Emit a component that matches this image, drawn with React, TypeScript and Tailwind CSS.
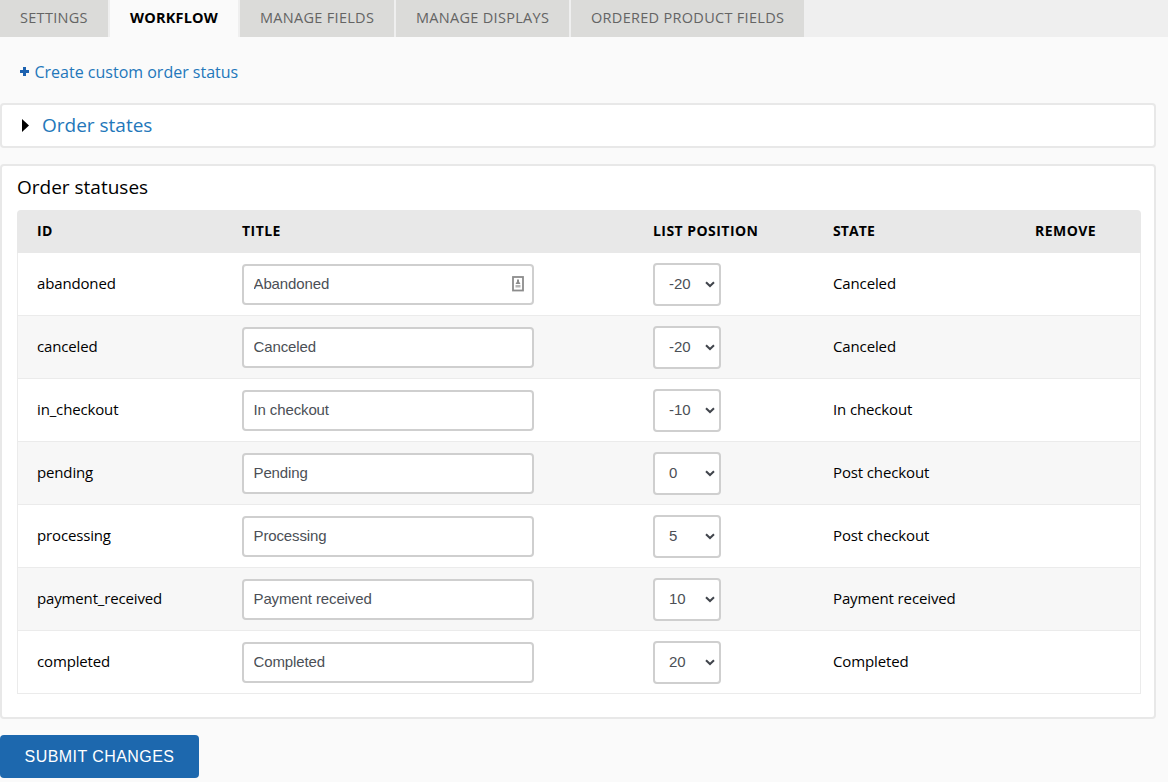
import { useState } from 'react'
import clsx from 'clsx'

const tabs = [
  { label: 'SETTINGS', width: 'w-[108px]' },
  { label: 'WORKFLOW', width: 'w-[128px]' },
  { label: 'MANAGE FIELDS', width: 'w-[154px]' },
  { label: 'MANAGE DISPLAYS', width: 'w-[173px]' },
  { label: 'ORDERED PRODUCT FIELDS', width: 'w-[233px]' },
]

const initialStatuses = [
  { id: 'abandoned', title: 'Abandoned', position: -20, state: 'Canceled', autofill: true },
  { id: 'canceled', title: 'Canceled', position: -20, state: 'Canceled' },
  { id: 'in_checkout', title: 'In checkout', position: -10, state: 'In checkout' },
  { id: 'pending', title: 'Pending', position: 0, state: 'Post checkout' },
  { id: 'processing', title: 'Processing', position: 5, state: 'Post checkout' },
  { id: 'payment_received', title: 'Payment received', position: 10, state: 'Payment received' },
  { id: 'completed', title: 'Completed', position: 20, state: 'Completed' },
]

const positions = Array.from({ length: 41 }, (_, i) => i - 20)

function ContactIcon() {
  return (
    <svg width="12" height="16" viewBox="0 0 12 16" className="absolute right-[10px] top-[12px]">
      <rect x="1" y="1" width="10" height="13.5" fill="#fff" stroke="#8c8c8c" strokeWidth="1.8" />
      <path d="M5 3.5h2v2L8.5 8h-5L5 5.5z" fill="#8c8c8c" />
      <rect x="3.5" y="9" width="5" height="2.5" fill="#b5b5b5" />
    </svg>
  )
}

function SelectArrow() {
  return (
    <svg width="10" height="7" viewBox="0 0 10 7" className="pointer-events-none absolute right-[6px] top-[18px]">
      <path d="M1 1.2 5 5 9 1.2" fill="none" stroke="#41454c" strokeWidth="2" />
    </svg>
  )
}

export default function App() {
  const [activeTab, setActiveTab] = useState('WORKFLOW')
  const [statuses, setStatuses] = useState(initialStatuses)

  const update = (id: string, values: { title?: string; position?: number }) => {
    setStatuses(statuses.map((s) => (s.id === id ? { ...s, ...values } : s)))
  }

  return (
    <div className="h-[782px] overflow-hidden bg-[#fafafa] font-['Open_Sans',sans-serif] text-[15px] text-black">
      <nav className="flex h-[37px] gap-0.5 bg-[#efefef]">
        {tabs.map((tab) => (
          <button
            key={tab.label}
            onClick={() => setActiveTab(tab.label)}
            className={clsx(
              'flex h-full shrink-0 items-start whitespace-nowrap pl-5 text-left text-[14.5px] leading-[35px]',
              tab.width,
              activeTab === tab.label
                ? 'bg-[#fafafa] font-bold tracking-[0.2px]'
                : 'bg-[#dbdbd9] tracking-[0.3px] text-[#646464]',
            )}
          >
            {tab.label}
          </button>
        ))}
      </nav>

      <a href="#" className="ml-5 mt-[23px] flex h-6 w-fit items-center text-base text-[#2377ba]">
        <svg width="9" height="9" viewBox="0 0 9 9" className="mb-px mr-[5.5px]">
          <path d="M3 0h3v3h3v3H6v3H3V6H0V3h3z" fill="#1d62b0" />
        </svg>
        Create custom order status
      </a>

      <div className="mt-[19px] flex h-[45px] w-[1156px] items-center rounded border-2 border-[#e8e8e8] bg-white pl-5">
        <svg width="7" height="13" viewBox="0 0 7 13" className="mr-[13px]">
          <path d="M0 0 7 6.5 0 13z" fill="#000" />
        </svg>
        <a href="#" className="pb-0.5 text-[19px] leading-6 text-[#2377ba]">Order states</a>
      </div>

      <div className="mt-4 h-[555px] w-[1156px] rounded border-2 border-[#e8e8e8] bg-white px-[15px] pt-[9px]">
        <h2 className="text-[19px] leading-[25px]">Order statuses</h2>

        <table className="mt-[10px] w-[1124px] table-fixed border-separate border-spacing-0">
          <colgroup>
            <col className="w-[205px]" />
            <col className="w-[411px]" />
            <col className="w-[180px]" />
            <col className="w-[202px]" />
            <col className="w-[126px]" />
          </colgroup>
          <thead>
            <tr className="h-[43px] text-left text-sm tracking-[0.45px]">
              <th className="rounded-tl bg-[#e8e8e8] px-5 pb-0.5 pt-0">ID</th>
              <th className="bg-[#e8e8e8] px-5 pb-0.5 pt-0">TITLE</th>
              <th className="bg-[#e8e8e8] px-5 pb-0.5 pt-0">LIST POSITION</th>
              <th className="bg-[#e8e8e8] px-5 pb-0.5 pt-0 tracking-[0.1px]">STATE</th>
              <th className="rounded-tr bg-[#e8e8e8] px-5 pb-0.5 pt-0">REMOVE</th>
            </tr>
          </thead>
          <tbody>
            {statuses.map((status) => (
              <tr key={status.id} className="h-[63px] even:bg-[#f7f7f7]">
                <td className="border-b border-l border-[#ebebeb] pb-0.5 pl-[19px] pt-0 tracking-[-0.15px]">{status.id}</td>
                <td className="border-b border-[#ebebeb] py-0 pl-5">
                  <div className="relative w-[292px]">
                    <input
                      type="text"
                      value={status.title}
                      onChange={(e) => update(status.id, { title: e.target.value })}
                      className="block h-[41px] w-full rounded border-2 border-[#cfcfcf] bg-white px-[9.5px] pb-[3px] pt-px font-['Liberation_Sans',sans-serif] text-[15px] tracking-[-0.12px] text-[#4b4f56]"
                    />
                    {status.autofill && <ContactIcon />}
                  </div>
                </td>
                <td className="border-b border-[#ebebeb] py-0 pl-5">
                  <div className="relative w-[68px]">
                    <select
                      value={status.position}
                      onChange={(e) => update(status.id, { position: Number(e.target.value) })}
                      className="block h-[43px] w-full appearance-none rounded border-2 border-[#cfcfcf] bg-white pl-[14px] font-['Liberation_Sans',sans-serif] text-[15px] text-[#4b4f56]"
                    >
                      {positions.map((p) => (
                        <option key={p} value={p}>{p}</option>
                      ))}
                    </select>
                    <SelectArrow />
                  </div>
                </td>
                <td className="border-b border-[#ebebeb] pb-0.5 pl-5 pt-0 tracking-[-0.13px]">{status.state}</td>
                <td className="border-b border-r border-[#ebebeb]"></td>
              </tr>
            ))}
          </tbody>
        </table>
      </div>

      <button className="mt-4 h-[43px] w-[199px] rounded bg-[#1d68ae] font-['Liberation_Sans',sans-serif] text-base tracking-[0.44px] text-white">
        SUBMIT CHANGES
      </button>
    </div>
  )
}
